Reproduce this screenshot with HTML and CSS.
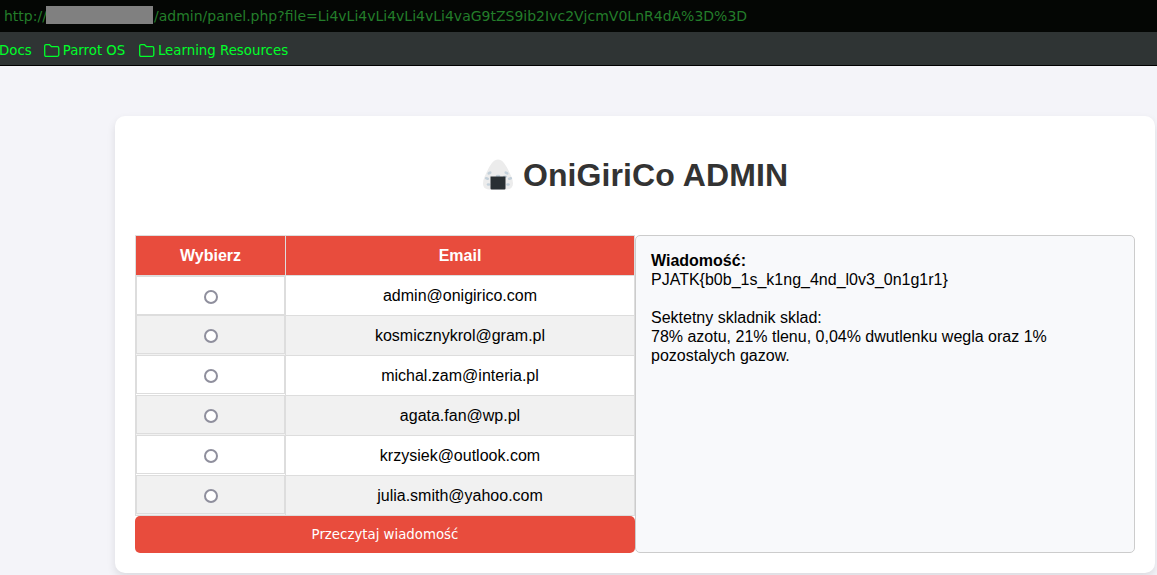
FILE: index.html
```
<!DOCTYPE html>
<html lang="pl">
<head>
<meta charset="utf-8">
<title>OniGiriCo ADMIN</title>
<link rel="stylesheet" href="styles.css">
</head>
<body>
<div class="urlbar"><span class="scheme">http://</span><span class="host"></span><span class="path">/admin/panel.php?file=Li4vLi4vLi4vLi4vLi4vaG9tZS9ib2Ivc2VjcmV0LnR4dA%3D%3D</span></div>
<nav class="bookmarks">
  <span class="bookmark docs">Docs</span>
  <span class="bookmark"><svg class="folder" viewBox="0 0 16 14"><path d="M.7 2.2Q.7.7 2.2.7H5.5L7.5 2.7H13.3Q14.8 2.7 14.8 4.2V10.8Q14.8 12.3 13.3 12.3H2.2Q.7 12.3.7 10.8Z"/></svg>Parrot OS</span>
  <span class="bookmark"><svg class="folder" viewBox="0 0 16 14"><path d="M.7 2.2Q.7.7 2.2.7H5.5L7.5 2.7H13.3Q14.8 2.7 14.8 4.2V10.8Q14.8 12.3 13.3 12.3H2.2Q.7 12.3.7 10.8Z"/></svg>Learning Resources</span>
</nav>
<main class="page">
  <section class="card">
    <h1 class="title">
      <svg class="onigiri" viewBox="0 0 32 31"><path fill="#ececec" d="M16 .5C20 .5 23 4.500 26 10.500C28.500 15.500 31 20 31 24.500C31 29 28 30.500 23.500 30.500H8.500C4 30.500 1 29 1 24.500C1 20 3.500 15.500 6 10.500C9 4.500 12 .5 16 .5Z"/><g fill="#c3d0da"><ellipse cx="7.500" cy="14" rx="2.200" ry="1.400" transform="rotate(-25 7.500 14)"/><ellipse cx="24.500" cy="14" rx="2.200" ry="1.400" transform="rotate(25 24.500 14)"/><ellipse cx="5" cy="19.500" rx="2.200" ry="1.300" transform="rotate(15 5 19.500)"/><ellipse cx="23" cy="17.600" rx="2.200" ry="1.200"/><ellipse cx="28" cy="19.500" rx="2.200" ry="1.300" transform="rotate(-15 28 19.500)"/><ellipse cx="6.500" cy="25.500" rx="1.800" ry="1.200"/><ellipse cx="26" cy="25.500" rx="1.800" ry="1.200"/><ellipse cx="16" cy="17" rx="2.300" ry="1.200"/></g><path fill="#292f33" d="M8.500 17.500H23.500V29.500Q23.500 30.500 22.500 30.500H9.500Q8.500 30.500 8.500 29.500Z"/></svg>
      <span>OniGiriCo ADMIN</span>
    </h1>
    <div class="columns">
      <form class="accounts">
        <div class="table">
          <div class="row head"><div class="pick">Wybierz</div><div class="email">Email</div></div>
          <div class="row first"><div class="pick"><i class="radio"></i></div><div class="email">admin@onigirico.com</div></div>
          <div class="row even"><div class="pick"><i class="radio"></i></div><div class="email">kosmicznykrol@gram.pl</div></div>
          <div class="row"><div class="pick"><i class="radio"></i></div><div class="email">michal.zam@interia.pl</div></div>
          <div class="row even"><div class="pick"><i class="radio"></i></div><div class="email">agata.fan@wp.pl</div></div>
          <div class="row"><div class="pick"><i class="radio"></i></div><div class="email">krzysiek@outlook.com</div></div>
          <div class="row even"><div class="pick"><i class="radio"></i></div><div class="email">julia.smith@yahoo.com</div></div>
        </div>
        <button class="read" type="button">Przeczytaj wiadomość</button>
      </form>
      <div class="message"><strong>Wiadomość:</strong><br>PJATK{b0b_1s_k1ng_4nd_l0v3_0n1g1r1}<br><br>Sektetny skladnik sklad:<br>78% azotu, 21% tlenu, 0,04% dwutlenku wegla oraz 1% pozostalych gazow.</div>
    </div>
  </section>
</main>
</body>
</html>
```
FILE: styles.css
```
* { box-sizing: border-box; }
body {
  margin: 0;
  height: 575px;
  overflow: hidden;
  background: #f4f4f9;
  color: #000;
  font: 16px/19px "Liberation Sans", Arial, sans-serif;
}
.urlbar {
  display: flex;
  align-items: center;
  height: 32px;
  padding-left: 4px;
  background: #040604;
  color: #237d2a;
  font: 14px/32px "DejaVu Sans", sans-serif;
  white-space: nowrap;
}
.scheme { width: 42px; }
.host { width: 107px; height: 18px; margin-top: -2px; background: #808080; }
.path { padding-left: 1px; }
.bookmarks {
  display: flex;
  height: 34px;
  padding-top: 4px;
  background: #2f3434;
  border-bottom: 1px solid #000;
  color: #00ff2a;
  font: 13.33px/29px "DejaVu Sans", sans-serif;
  white-space: nowrap;
}
.bookmark { display: flex; align-items: center; margin-right: 13.6px; }
.docs { margin-left: -1px; margin-right: 12px; }
.folder {
  width: 16px;
  height: 14px;
  margin: 0 3px 0 0;
  fill: none;
  stroke: #00ff2a;
  stroke-width: 1.3;
}
.page { padding: 50px 2px 0 115px; }
.card {
  height: 457px;
  padding: 20px;
  background: #fff;
  border-radius: 10px;
  box-shadow: 0 4px 8px rgba(0, 0, 0, .1);
}
.title {
  display: flex;
  justify-content: center;
  align-items: center;
  height: 37px;
  margin: 21px 0 41px;
  color: #333;
  font-size: 32px;
  line-height: 37px;
  letter-spacing: .1px;
}
.onigiri { width: 32px; height: 31px; margin: -3px 9px 0 0; }
.columns { display: grid; grid-template-columns: 500px 500px; height: 318px; }
.table {
  border: solid #ddd;
  border-width: 0 1px 1px;
}
.row {
  display: grid;
  grid-template-columns: 149px 1fr;
  height: 40px;
  border-top: 1px solid #ddd;
  text-align: center;
}
.email {
  border-left: 1px solid #ddd;
  line-height: 39px;
}
.even { background: #f1f1f1; }
.pick {
  height: 38px;
  padding-top: 13px;
  border: solid #ddd;
  border-width: 0 1px 1px;
}
.first .pick { height: 39px; border-top-width: 1px; }
.head { background: #e84c3d; color: #fff; font-weight: bold; }
.head .pick { padding: 0; border: 0; line-height: 39px; }
.radio {
  display: block;
  width: 14px;
  height: 14px;
  margin: 0 auto;
  border: 2px solid #8f8f9d;
  border-radius: 50%;
  background: #fff;
}
.read {
  display: block;
  width: 100%;
  height: 37px;
  padding: 0;
  border: 0;
  border-radius: 5px;
  background: #e84c3d;
  color: #fff;
  font: 13.33px/37px "DejaVu Sans", sans-serif;
}
.message {
  padding: 15px;
  border: 1px solid #ccc;
  border-radius: 5px;
  background: #f8f9fb;
}
```
